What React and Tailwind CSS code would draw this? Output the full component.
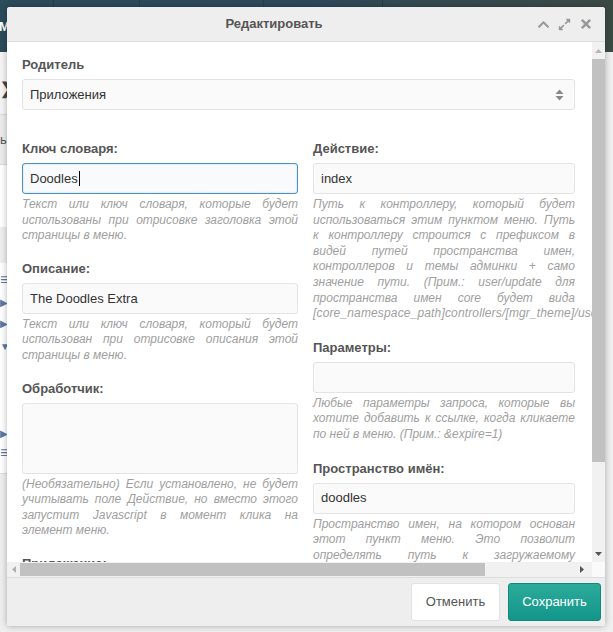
import React from "react";
import { FaChevronUp, FaExpandAlt, FaTimes } from "react-icons/fa";

const Tri = ({ dir, color }) => {
  const v = dir === "up" || dir === "down";
  const w = v ? 7 : 4;
  const h = v ? 4 : 7;
  const d = {
    up: "M0 4 L3.5 0 L7 4Z",
    down: "M0 0 L7 0 L3.5 4Z",
    left: "M4 0 L4 7 L0 3.5Z",
    right: "M0 0 L4 3.5 L0 7Z",
  }[dir];
  return (
    <svg width={w} height={h} viewBox={`0 0 ${w} ${h}`}>
      <path d={d} fill={color} />
    </svg>
  );
};

function Help({ lines, overflowLast }) {
  return (
    <div className="mt-[3px] text-[12px] leading-[15.6px] italic text-[#a0a0a0]">
      {lines.map((l, i) =>
        i < lines.length - 1 ? (
          <div key={i} className="text-justify [text-align-last:justify]">
            {l}
          </div>
        ) : (
          <div key={i} className={overflowLast ? "whitespace-nowrap tracking-[0.15px]" : ""}>
            {l}
          </div>
        )
      )}
    </div>
  );
}

function Label({ children }) {
  return (
    <div className="text-[13px] leading-[18px] font-bold text-[#555] mb-[5px]">
      {children}
    </div>
  );
}

function Input({ children, focused, tall }) {
  return (
    <div
      className={
        "rounded-[3px] border px-[7px] text-[13px] text-[#333] flex " +
        (tall ? "h-[71px] items-start " : "h-[31px] items-center ") +
        (focused
          ? "border-[#4a8fc9] bg-[#f8fafc] shadow-[inset_0_0_2px_rgba(74,143,201,0.35)]"
          : "border-[#e3e3e3] bg-[#fafafa]")
      }
    >
      {children}
    </div>
  );
}

function Field({ label, value, focused, tall, help, overflowLast, className = "" }) {
  return (
    <div className={className}>
      <Label>{label}</Label>
      <Input focused={focused} tall={tall}>
        <span>{value}</span>
        {focused && <span className="inline-block w-[1px] h-[15px] bg-black ml-[1px]" />}
      </Input>
      {help && <Help lines={help} overflowLast={overflowLast} />}
    </div>
  );
}

export default function App() {
  return (
    <div className="relative w-[613px] h-[632px] overflow-hidden bg-[#eeeeee] font-['Liberation_Sans',Arial,sans-serif]">
      {/* background page */}
      <div className="h-[52px] bg-gradient-to-r from-[#2c4b5b] via-[#30495a] to-[#3c4a44] flex">
        <div className="w-[55px] border-r border-[#243f4c] text-white font-bold text-[13px] pt-[19px] leading-[16px] -ml-[1px]">
          Медиа
        </div>
        <div className="w-[86px] border-r border-[#243f4c]" />
        <div className="w-[124px] border-r border-[#243f4c]" />
        <div className="w-[119px] border-r border-[#243f4c]" />
      </div>
      <div className="flex h-[580px]">
        <div className="w-[200px] flex flex-col">
          <div className="h-[63px] bg-[#f4f4f4] border-b border-[#dcdcdc] pt-[28px] leading-[18px] text-[16px] font-bold text-[#444]">
            ❯
          </div>
          <div className="h-[50px] bg-[#ececec] border-b border-[#dcdcdc] flex items-center text-[13px] text-[#555]">
            ь
          </div>
          <div className="h-[62px] bg-white" />
          <div className="h-[36px] bg-[#eeeeee]" />
          <div className="h-[210px] bg-white text-[#5a78a0] text-[10px]">
            <div className="mt-[7px] h-[20px] flex items-center text-[16px]">≡</div>
            <div className="mt-[2px] h-[20px] flex items-center">▶</div>
            <div className="mt-[1px] h-[20px] flex items-center">▶</div>
            <div className="mt-[3px] h-[20px] flex items-center">▼</div>
            <div className="mt-[67px] h-[20px] flex items-center">▶</div>
            <div className="h-[20px] flex items-center text-[16px]">≡</div>
          </div>
          <div className="flex-1 bg-[#eeeeee] border-t border-[#dcdcdc]" />
        </div>
        <div className="flex-1 bg-[#efefef]" />
      </div>

      {/* modal */}
      <div className="absolute left-[7px] top-[7px] w-[598px] flex flex-col rounded-[3px] overflow-hidden bg-white shadow-[0_0_6px_rgba(0,0,0,0.3)]">
        {/* header */}
        <div className="h-[35px] bg-[#eeeeee] border-b border-[#dddddd] flex items-center">
          <div className="flex-1 text-center pl-[4px] text-[13px] font-bold text-[#555]">
            Редактировать
          </div>
          <div className="flex items-center gap-[8px] pr-[12px] text-[#999]">
            <FaChevronUp size={13} />
            <FaExpandAlt size={13} />
            <FaTimes size={14} />
          </div>
        </div>

        {/* body */}
        <div className="flex h-[520px]">
          <div className="flex-1 overflow-hidden">
            <div className="pl-[15px] pt-[14px] w-[568px]">
              <Label>Родитель</Label>
              <div className="h-[31px] w-[553px] rounded-[3px] border border-[#e3e3e3] bg-[#fafafa] px-[7px] flex items-center justify-between text-[13px] text-[#333]">
                <span>Приложения</span>
                <svg width="9" height="12" viewBox="0 0 9 12" className="mr-[3px]">
                  <path d="M0.5 5 L4.5 0.5 L8.5 5Z" fill="#888" />
                  <path d="M0.5 7 L8.5 7 L4.5 11.5Z" fill="#888" />
                </svg>
              </div>

              <div className="flex mt-[30px]">
                <div className="w-[276px]">
                  <Field
                    label="Ключ словаря:"
                    value="Doodles"
                    focused
                    help={[
                      "Текст или ключ словаря, которые будет",
                      "использованы при отрисовке заголовка этой",
                      "страницы в меню.",
                    ]}
                  />
                  <Field
                    className="mt-[16px]"
                    label="Описание:"
                    value="The Doodles Extra"
                    help={[
                      "Текст или ключ словаря, который будет",
                      "использован при отрисовке описания этой",
                      "страницы в меню.",
                    ]}
                  />
                  <Field
                    className="mt-[16px]"
                    label="Обработчик:"
                    value=""
                    tall
                    help={[
                      "(Необязательно) Если установлено, не будет",
                      "учитывать поле Действие, но вместо этого",
                      "запустит Javascript в момент клика на",
                      "элемент меню.",
                    ]}
                  />
                  <div className="mt-[16px]">
                    <Label>Приложение:</Label>
                  </div>
                </div>
                <div className="w-[262px] ml-[15px]">
                  <Field
                    label="Действие:"
                    value="index"
                    overflowLast
                    help={[
                      "Путь к контроллеру, который будет",
                      "использоваться этим пунктом меню. Путь",
                      "к контроллеру строится с префиксом в",
                      "видей путей пространства имен,",
                      "контроллеров и темы админки + само",
                      "значение пути. (Прим.: user/update для",
                      "пространства имен core будет вида",
                      "[core_namespace_path]controllers/[mgr_theme]/user/update.class.php)",
                    ]}
                  />
                  <Field
                    className="mt-[17px]"
                    label="Параметры:"
                    value=""
                    help={[
                      "Любые параметры запроса, которые вы",
                      "хотите добавить к ссылке, когда кликаете",
                      "по ней в меню. (Прим.: &expire=1)",
                    ]}
                  />
                  <Field
                    className="mt-[17px]"
                    label="Пространство имён:"
                    value="doodles"
                    help={[
                      "Пространство имен, на котором основан",
                      "этот пункт меню. Это позволит",
                      "определять путь к загружаемому",
                      "контроллеру.",
                    ]}
                  />
                </div>
              </div>
            </div>
          </div>
          {/* vertical scrollbar */}
          <div className="w-[13px] bg-[#f1f1f1] flex flex-col">
            <div className="h-[17px] flex items-center justify-center">
              <Tri dir="up" color="#b5b5b5" />
            </div>
            <div className="h-[403px] bg-[#c1c1c1]" />
            <div className="flex-1" />
            <div className="h-[17px] flex items-center justify-center">
              <Tri dir="down" color="#555" />
            </div>
          </div>
        </div>

        {/* horizontal scrollbar */}
        <div className="h-[15px] flex">
          <div className="flex-1 bg-[#f1f1f1] flex items-center">
            <div className="w-[13px] flex items-center justify-center">
              <Tri dir="left" color="#b0b0b0" />
            </div>
            <div className="w-[465px] h-[13px] bg-[#c1c1c1]" />
            <div className="flex-1" />
            <div className="w-[20px] flex items-center justify-center">
              <Tri dir="right" color="#555" />
            </div>
          </div>
          <div className="w-[13px] bg-[#fafafa]" />
        </div>

        {/* footer */}
        <div className="h-[49px] bg-[#eeeeee] border-t border-[#dddddd] flex items-center justify-end gap-[8px] pr-[4px]">
          <div className="w-[89px] h-[38px] rounded-[3px] bg-white border border-[#e2e2e2] flex items-center justify-center text-[13px] text-[#555]">
            Отменить
          </div>
          <div className="w-[93px] h-[38px] rounded-[3px] bg-gradient-to-b from-[#2cab9b] to-[#11968a] border border-[#10897d] flex items-center justify-center text-[13px] text-white">
            Сохранить
          </div>
        </div>
      </div>
    </div>
  );
}
